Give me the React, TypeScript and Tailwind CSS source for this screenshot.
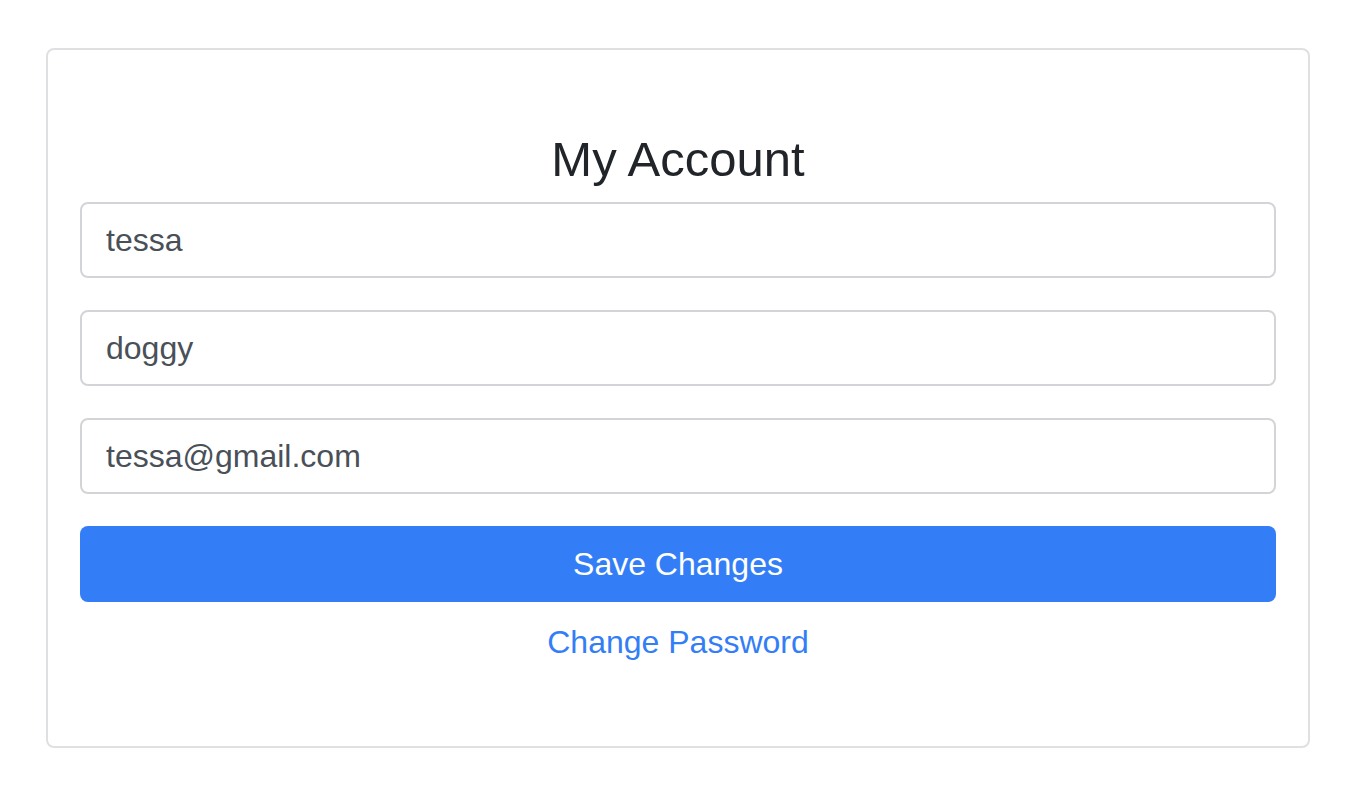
import React from "react";

export default function App() {
  const fields = ["tessa", "doggy", "tessa@gmail.com"];

  return (
    <div className="min-h-screen bg-white pt-[48px] font-['Liberation_Sans',Arial,sans-serif]">
      <div className="ml-[46px] w-[1264px] h-[700px] border-2 border-[#dfe0e2] rounded-[8px] px-[32px] pt-[80px]">
        <h2 className="text-[49px] leading-[58px] text-[#212529] text-center mb-[14px]">My Account</h2>

        <form className="flex flex-col gap-[32px]" onSubmit={(e) => e.preventDefault()}>
          {fields.map((v) => (
            <input
              key={v}
              defaultValue={v}
              className="w-full h-[76px] border-2 border-[#d2d4d7] rounded-[8px] px-[24px] text-[32px] text-[#495057] outline-none"
            />
          ))}
          <button
            type="submit"
            className="w-full h-[76px] rounded-[8px] bg-[#337ef6] text-white text-[32px]"
          >
            Save Changes
          </button>
        </form>

        <div className="text-center mt-[16px]">
          <a href="#" className="text-[32px] leading-[48px] text-[#337ef6]">Change Password</a>
        </div>
      </div>
    </div>
  );
}
